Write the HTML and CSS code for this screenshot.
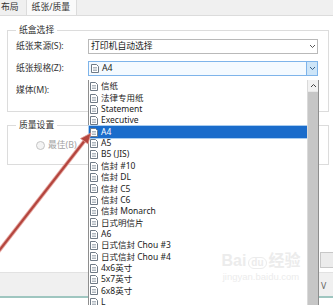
FILE: index.html
```html
<!DOCTYPE html>
<html lang="zh-CN">
<head>
  <meta charset="UTF-8">
  <title>纸张/质量</title>
  <link rel="stylesheet" href="styles.css">
</head>
<body>
  <svg width="0" height="0" class="defs">
    <symbol id="doc" viewBox="0 0 8 9">
      <path d="M0.5 0.5 H5.5 L7.5 2.5 V8.5 H0.5 Z" fill="#fff" stroke="#6f7a86" stroke-width="1"/>
      <path d="M2 3.5 H6 M2 5 H6 M2 6.5 H6" stroke="#9aa4ae" stroke-width="0.8"/>
    </symbol>
  </svg>

  <div class="tabs">
    <div class="tab">布局</div>
    <div class="tab selected">纸张/质量</div>
  </div>

  <div class="panel">
    <fieldset class="group">
      <legend>纸盒选择</legend>
      <div class="row">
        <span class="label">纸张来源(S):</span>
        <div class="combo">
          <span class="combo-text">打印机自动选择</span>
          <span class="combo-btn">
            <svg width="7" height="5" viewBox="0 0 7 5"><path d="M1 1 L3.5 3.5 L6 1" fill="none" stroke="#555" stroke-width="1"/></svg>
          </span>
        </div>
      </div>
      <div class="row">
        <span class="label">纸张规格(Z):</span>
        <div class="combo focused">
          <span class="combo-text"><svg class="doc"><use href="#doc"/></svg>A4</span>
          <span class="combo-btn">
            <svg width="7" height="5" viewBox="0 0 7 5"><path d="M1 1 L3.5 3.5 L6 1" fill="none" stroke="#3a5f86" stroke-width="1"/></svg>
          </span>
        </div>
      </div>
      <div class="row">
        <span class="label">媒体(M):</span>
      </div>
    </fieldset>

    <fieldset class="group quality">
      <legend>质量设置</legend>
      <div class="radio-row">
        <span class="radio"></span>
        <span class="radio-label">最佳(B)</span>
      </div>
    </fieldset>

    <div class="adv-btn"></div>
  </div>

  <div class="footer">
    <span class="footer-key">V</span>
  </div>

  <div class="dropdown">
    <ul class="list">
      <li><svg class="doc"><use href="#doc"/></svg>信纸</li>
      <li><svg class="doc"><use href="#doc"/></svg>法律专用纸</li>
      <li><svg class="doc"><use href="#doc"/></svg>Statement</li>
      <li><svg class="doc"><use href="#doc"/></svg>Executive</li>
      <li class="active"><svg class="doc"><use href="#doc"/></svg>A4</li>
      <li><svg class="doc"><use href="#doc"/></svg>A5</li>
      <li><svg class="doc"><use href="#doc"/></svg>B5 (JIS)</li>
      <li><svg class="doc"><use href="#doc"/></svg>信封 #10</li>
      <li><svg class="doc"><use href="#doc"/></svg>信封 DL</li>
      <li><svg class="doc"><use href="#doc"/></svg>信封 C5</li>
      <li><svg class="doc"><use href="#doc"/></svg>信封 C6</li>
      <li><svg class="doc"><use href="#doc"/></svg>信封 Monarch</li>
      <li><svg class="doc"><use href="#doc"/></svg>日式明信片</li>
      <li><svg class="doc"><use href="#doc"/></svg>A6</li>
      <li><svg class="doc"><use href="#doc"/></svg>日式信封 Chou #3</li>
      <li><svg class="doc"><use href="#doc"/></svg>日式信封 Chou #4</li>
      <li><svg class="doc"><use href="#doc"/></svg>4x6英寸</li>
      <li><svg class="doc"><use href="#doc"/></svg>5x7英寸</li>
      <li><svg class="doc"><use href="#doc"/></svg>6x8英寸</li>
      <li><svg class="doc"><use href="#doc"/></svg>L</li>
    </ul>
    <div class="scrollbar">
      <div class="scroll-up">
        <svg width="7" height="5" viewBox="0 0 7 5"><path d="M1 4 L3.5 1.5 L6 4" fill="none" stroke="#444" stroke-width="1"/></svg>
      </div>
      <div class="scroll-thumb"></div>
    </div>
  </div>

  <div class="watermark">
    <div class="wm-logo">Bai<span class="wm-du">du</span>经验</div>
    <div class="wm-url">jingyan.baidu.com</div>
  </div>

  <svg class="arrow" width="333" height="305" viewBox="0 0 333 305">
    <line x1="-2" y1="252" x2="86" y2="139" stroke="#e7a9a3" stroke-width="4"/>
    <line x1="-2" y1="252" x2="86" y2="139" stroke="#b4453e" stroke-width="2.2"/>
    <polygon points="91,133 88,144 80.5,138.5" fill="#b4453e" stroke="#e29a93" stroke-width="0.8"/>
  </svg>
</body>
</html>
```

FILE: styles.css
```css
:root {
  --chrome: #f0f0f0;
  --border: #dcdcdc;
  --text: #1a1a1a;
  --muted: #a2a2a2;
  --select: #1a6ccb;
  --focus: #7eb4ea;
}
body {
  margin: 0;
  width: 333px;
  height: 305px;
  overflow: hidden;
  background: #fff;
  color: var(--text);
  font-family: "Noto Sans", "Noto Sans CJK SC", sans-serif;
  font-size: 8.8px;
  line-height: 1;
  position: relative;
}
.defs {
  position: absolute;
}
.tabs {
  display: flex;
  height: 15px;
  background: var(--chrome);
  border-bottom: 1px solid var(--border);
}
.tab {
  padding: 0 4px 0 1px;
  line-height: 15px;
  color: #333;
}
.tab.selected {
  background: #fafafa;
  border-left: 1px solid var(--border);
  border-right: 1px solid var(--border);
  padding: 0 6px 0 5px;
  margin-left: 3px;
}
.panel {
  height: 256px;
  padding-top: 8px;
  box-sizing: border-box;
  position: relative;
}
.group {
  margin: 0 4px 0 7px;
  padding: 3px 10px 13px 8px;
  border: 1px solid var(--border);
  min-width: 0;
}
.group legend {
  padding: 0 3px;
  margin-left: 0;
  line-height: 12px;
  color: #333;
}
.row {
  display: flex;
  align-items: center;
  height: 15px;
  margin-bottom: 7px;
}
.row:last-child {
  margin-bottom: 0;
}
.label {
  width: 72px;
  color: #333;
}
.combo {
  flex: 1;
  height: 15px;
  box-sizing: border-box;
  border: 1px solid #b9b9b9;
  display: flex;
  align-items: center;
  background: #fff;
}
.combo-text {
  flex: 1;
  display: flex;
  align-items: center;
  padding-left: 2px;
}
.combo-btn {
  width: 10px;
  height: 100%;
  display: flex;
  align-items: center;
  justify-content: center;
}
.combo.focused {
  border-color: var(--focus);
  background: #f4faff;
}
.combo.focused .combo-btn {
  background: #cde5f8;
  border-left: 1px solid var(--focus);
}
.doc {
  width: 8px;
  height: 9px;
  margin-right: 3px;
  flex: none;
}
.quality {
  margin-top: 7px;
  height: 46px;
  box-sizing: border-box;
  padding: 10px 0 0 8px;
}
.radio-row {
  display: flex;
  align-items: center;
  gap: 3px;
  padding-left: 20px;
}
.radio {
  width: 7px;
  height: 7px;
  border: 1px solid #c4c4c4;
  border-radius: 50%;
  background: #f4f4f4;
}
.radio-label {
  color: var(--muted);
}
.adv-btn {
  position: absolute;
  left: 320px;
  top: 236px;
  width: 30px;
  height: 16px;
  box-sizing: border-box;
  border: 1px solid #c8c8c8;
  background: #ececec;
}
.footer {
  height: 26px;
  background: var(--chrome);
  border-top: 1px solid #e2e2e2;
  border-bottom: 2px solid #9fc6c0;
  box-sizing: border-box;
  position: relative;
}
.footer-key {
  position: absolute;
  left: 321px;
  top: 9px;
  color: #666;
}
.dropdown {
  position: absolute;
  left: 88px;
  top: 80px;
  width: 231px;
  height: 240px;
  box-sizing: border-box;
  border: 1px solid #8e8e8e;
  border-top: none;
  background: #fff;
  display: flex;
  font-size: 8.5px;
}
.list {
  list-style: none;
  margin: 0;
  padding: 1px 0 0 0;
  flex: 1;
}
.list li {
  height: 11.35px;
  display: flex;
  align-items: center;
  padding-left: 1px;
  white-space: nowrap;
}
.list li.active {
  background: var(--select);
  color: #fff;
  outline: 1px solid #a9cdf0;
}
.scrollbar {
  width: 10px;
  background: #e8e8e8;
  border-left: 1px solid #dadada;
  display: flex;
  flex-direction: column;
}
.scroll-up {
  height: 11px;
  display: flex;
  align-items: center;
  justify-content: center;
  background: #f2f2f2;
}
.scroll-thumb {
  flex: 1;
  margin-top: 1px;
  background: #c6c6c6;
}
.watermark {
  position: absolute;
  left: 215px;
  top: 253px;
  width: 92px;
  color: #ececec;
  text-align: center;
}
.wm-logo {
  font-family: "Liberation Sans", "Noto Sans CJK SC", sans-serif;
  font-size: 16px;
  font-weight: bold;
  white-space: nowrap;
}
.wm-du {
  display: inline-block;
  margin: 0 2px;
  padding: 0 2px;
  border: 1px solid #ececec;
  border-radius: 7px;
  font-size: 10px;
}
.wm-url {
  font-family: "Liberation Sans", sans-serif;
  font-size: 9.5px;
  margin-top: 3px;
  white-space: nowrap;
}
.arrow {
  position: absolute;
  left: 0;
  top: 0;
  pointer-events: none;
}
```
